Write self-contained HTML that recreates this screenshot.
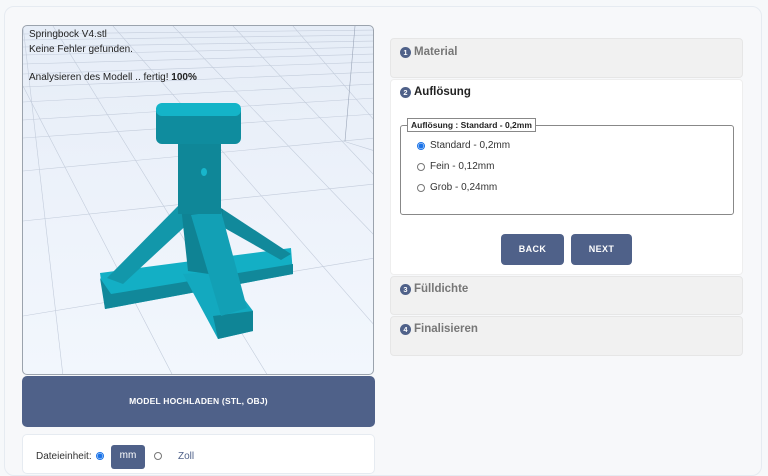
<!DOCTYPE html>
<html><head><meta charset="utf-8"><style>
*{box-sizing:border-box;margin:0;padding:0}
body{width:768px;height:463px;overflow:hidden;background:#f6f8fa;font-family:"Liberation Sans",sans-serif;position:relative}
.outer{position:absolute;left:4px;top:6px;width:758px;height:470px;background:#f7f8fa;border:1px solid #e6ebf1;border-radius:10px}
.viewer{position:absolute;left:22px;top:25px;width:352px;height:350px;border:1px solid #9ba3ad;border-radius:5px;overflow:hidden;background:linear-gradient(180deg,#e6edf7 0%,#eef3fb 60%,#f2f7fd 100%)}
.viewer .t{position:absolute;left:6px;font-size:10px;color:#222}
.upl{position:absolute;left:22px;top:376px;width:353px;height:51px;background:#4f6189;border-radius:5px;color:#fff;font-size:8.5px;font-weight:bold;text-align:center;line-height:51px;letter-spacing:.2px}
.unit{position:absolute;left:22px;top:434px;width:353px;height:40px;background:#fff;border:1px solid #e6ebf1;border-radius:5px;font-size:10px;color:#333}
.panel{position:absolute;left:390px;width:353px;background:#f1f1f1;border:1px solid #e6e6e6;border-radius:4px}
.ph{position:absolute;left:9px;font-size:11.5px;font-weight:bold;color:#777;display:flex;align-items:center}
.num{display:inline-block;width:11px;height:11px;border-radius:50%;background:#4f6189;color:#fff;font-size:7.5px;line-height:11px;text-align:center;margin-right:3px}
.rad{position:absolute;left:16px;font-size:10px;color:#333;display:flex;align-items:center}
.rc{width:8px;height:8px;border:1px solid #777;border-radius:50%;margin-right:5px;background:#fff}
.rc.on{border-color:#1a73e8;background:radial-gradient(circle,#1a73e8 0 2.3px,#fff 2.8px)}
.btn{position:absolute;top:234px;height:31px;background:#4f6189;border-radius:4px;color:#fff;font-size:9px;font-weight:bold;text-align:center;line-height:31px;letter-spacing:.4px}
</style></head><body>
<div class="outer"></div>
<div class="viewer">
<svg width="352" height="350" style="position:absolute;left:0;top:0" stroke="#c3ccdb" stroke-width="0.6" fill="none">
<g>
<line x1="0" y1="8" x2="352" y2="4"/><line x1="0" y1="14" x2="352" y2="9"/><line x1="0" y1="21" x2="352" y2="15"/>
<line x1="0" y1="29" x2="352" y2="21"/><line x1="0" y1="38" x2="352" y2="28"/><line x1="0" y1="48" x2="352" y2="36"/>
<line x1="0" y1="61" x2="352" y2="46"/><line x1="0" y1="76" x2="352" y2="58"/><line x1="0" y1="94" x2="352" y2="72"/>
<line x1="0" y1="112" x2="352" y2="88"/><line x1="0" y1="145" x2="352" y2="112"/><line x1="0" y1="195" x2="352" y2="158"/>
<line x1="0" y1="290" x2="352" y2="232"/>
<line x1="0" y1="60" x2="150" y2="350"/><line x1="30" y1="0" x2="245" y2="350"/><line x1="90" y1="0" x2="352" y2="300"/>
<line x1="150" y1="0" x2="352" y2="210"/><line x1="210" y1="0" x2="352" y2="150"/><line x1="270" y1="0" x2="352" y2="95"/>
<line x1="0" y1="0" x2="40" y2="350"/><line x1="320" y1="115" x2="352" y2="125"/>
<line x1="332" y1="0" x2="322" y2="115" stroke="#9aa5b8"/>
</g>
<g stroke="none">
<polygon points="77,247 268,222 270,248 82,283" fill="#13afc5"/>
<polygon points="77,252 82,283 270,248 270,238 88,268" fill="#11889a"/>
<polygon points="160,248 200,245 230,285 230,305 195,313" fill="#13a9bf"/>
<polygon points="190,290 230,285 230,305 195,313" fill="#0f8596"/>
<polygon points="155,180 170,193 100,258 84,252" fill="#1297aa"/>
<polygon points="198,182 198,200 258,234 268,228" fill="#11899b"/>
<polygon points="158,180 200,183 200,250 165,245" fill="#0f8394"/>
<polygon points="168,189 198,185 224,282 198,290" fill="#12a0b5"/>
<rect x="155" y="110" width="43" height="78" fill="#0f8798"/>
<rect x="133" y="78" width="85" height="40" rx="6" fill="#0f8c9e"/>
<rect x="133" y="77" width="85" height="13" rx="6" fill="#14b4c8"/>
<ellipse cx="181" cy="146" rx="3" ry="4" fill="#18b6cb"/>
</g>
</svg>
<div class="t" style="top:3px">Springbock V4.stl</div>
<div class="t" style="top:18px">Keine Fehler gefunden.</div>
<div class="t" style="top:46px">Analysieren des Modell .. fertig! <b>100%</b></div>
</div>
<div class="upl">MODEL HOCHLADEN (STL, OBJ)</div>
<div class="unit">
<span style="position:absolute;left:13px;top:16px">Dateieinheit:</span>
<span class="rc on" style="position:absolute;left:73px;top:17px"></span>
<span style="position:absolute;left:88px;top:10px;width:34px;height:24px;background:#4f6189;color:#fff;border-radius:3px;text-align:center;line-height:22px">mm</span>
<span class="rc" style="position:absolute;left:131px;top:17px"></span>
<span style="position:absolute;left:155px;top:16px;color:#4f6189">Zoll</span>
</div>

<div class="panel" style="top:38px;height:40px"><div class="ph" style="top:7px"><span class="num">1</span>Material</div></div>
<div class="panel" style="top:79px;height:196px;background:#fff;border-color:#eee">
<div class="ph" style="top:6px;color:#222"><span class="num">2</span>Auflösung</div>
<div style="position:absolute;left:9px;top:45px;width:334px;height:90px;border:1px solid #888;border-radius:3px">
<div style="position:absolute;left:6px;top:-8px;background:#fff;border:1px solid #888;font-size:8.5px;font-weight:bold;color:#222;padding:1px 3px">Auflösung : Standard - 0,2mm</div>
<div class="rad" style="top:14px"><span class="rc on"></span>Standard - 0,2mm</div>
<div class="rad" style="top:35px"><span class="rc"></span>Fein - 0,12mm</div>
<div class="rad" style="top:56px"><span class="rc"></span>Grob - 0,24mm</div>
</div>
</div>
<div class="btn" style="left:501px;width:63px">BACK</div>
<div class="btn" style="left:571px;width:61px">NEXT</div>
<div class="panel" style="top:276px;height:39px"><div class="ph" style="top:6px"><span class="num">3</span>Fülldichte</div></div>
<div class="panel" style="top:316px;height:40px"><div class="ph" style="top:6px"><span class="num">4</span>Finalisieren</div></div>
</body></html>
